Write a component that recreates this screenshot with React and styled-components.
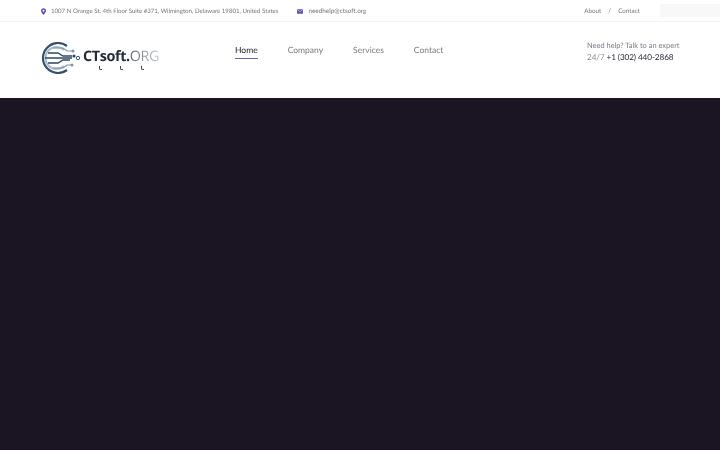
import React from 'react';
import styled, { createGlobalStyle } from 'styled-components';

const GlobalStyle = createGlobalStyle`
  * { margin: 0; padding: 0; box-sizing: border-box; }
  html, body { height: 100%; }
  body {
    background: #fff;
    font-family: Lato, "Open Sans", Arial, sans-serif;
    text-rendering: geometricPrecision;
    overflow: hidden;
  }
`;

const Page = styled.div`
  display: flex;
  flex-direction: column;
  height: 450px;
  will-change: transform;
`;

const TopBar = styled.div`
  display: flex;
  align-items: center;
  height: 22px;
  padding: 1px 0 0 41px;
  border-bottom: 1px solid #f2f2f4;
  color: #77757f;
`;

const InfoItem = styled.span`
  display: flex;
  align-items: center;
  gap: 5px;
  margin-right: ${p => p.$gap || 0}px;
  font-size: ${p => p.$size}px;
  white-space: nowrap;
`;

const TopLinks = styled.div`
  display: flex;
  align-items: center;
  margin-left: auto;
  gap: 7px;
  font-size: 6.3px;
`;

const SearchStub = styled.div`
  width: 60px;
  height: 13px;
  margin-top: -1px;
  margin-left: 13px;
  background: #f8f8f9;
`;

const Header = styled.header`
  display: grid;
  grid-template-columns: 195px 352px 1fr;
  align-items: start;
  height: 76px;
  padding: 19px 0 0 40px;
`;

const Logo = styled.div`
  display: flex;
  align-items: center;
  height: 32px;
  margin-top: 1px;
  position: relative;
`;

const LogoText = styled.span`
  font-family: "Open Sans", Arial, sans-serif;
  font-size: 14.4px;
  font-weight: 700;
  letter-spacing: -0.4px;
  color: #232b3a;
  margin-left: -1px;
  margin-top: -4px;
`;

const LogoOrg = styled.span`
  font-weight: 400;
  background: linear-gradient(90deg, #5f6b7a, #c6ccd4);
  -webkit-background-clip: text;
  background-clip: text;
  color: transparent;
`;

const LogoTicks = styled.div`
  position: absolute;
  left: 59px;
  top: 24px;
  display: flex;
  gap: 18px;
`;

const Tick = styled.i`
  display: block;
  width: 3px;
  height: 4px;
  border-left: 1px solid #3b4352;
  border-bottom: 1px solid #3b4352;
  border-bottom-left-radius: 2px;
`;

const Nav = styled.nav`
  display: flex;
  gap: 30px;
  font-size: 8.5px;
  margin-top: 3px;
`;

const NavLink = styled.a`
  display: block;
  padding: 1px 0 3px;
  color: ${p => (p.$active ? '#1c1726' : '#7b7984')};
  border-bottom: 1px solid ${p => (p.$active ? '#6a5fb0' : 'transparent')};
`;

const Help = styled.div`
  display: flex;
  flex-direction: column;
  gap: 2px;
  font-size: 7.45px;
  color: #7b7984;
`;

const Phone = styled.div`
  font-size: 8.2px;
  letter-spacing: -0.1px;
  color: #8a8893;
`;

const PhoneNumber = styled.span`
  color: #2a2634;
`;

const Hero = styled.main`
  flex: 1;
  background: #1a1423;
`;

const PinIcon = () => (
  <svg width="5" height="7" viewBox="0 0 6 8">
    <path d="M3 0a3 3 0 0 1 3 3c0 2-3 5-3 5S0 5 0 3a3 3 0 0 1 3-3z" fill="#5b4fb5" />
    <circle cx="3" cy="3" r="1.2" fill="#fff" />
  </svg>
);

const MailIcon = () => (
  <svg width="6" height="5" viewBox="0 0 7 6">
    <rect width="7" height="5.6" y="0.2" rx="0.6" fill="#5b4fb5" />
    <path d="M0.6 1.2 3.5 3.2 6.4 1.2" fill="none" stroke="#fff" strokeWidth="0.6" />
  </svg>
);

const LogoMark = () => (
  <svg width="44" height="32" viewBox="0 0 44 32" fill="none">
    <path d="M27 4A15 15 0 1 0 27 28" stroke="#34506f" strokeWidth="2.2" />
    <path d="M24 8A11 11 0 1 0 24 24" stroke="#a9bccd" strokeWidth="2" />
    <path d="M8 11h10l5 3h9M5 16h27M8 21h10l5-3h7" stroke="#2f4763" strokeWidth="1.3" />
    <path d="M13 6h10l4 3h5M13 26h10l4-3h4" stroke="#7f97ae" strokeWidth="1.2" />
    <circle cx="33" cy="9" r="1.5" fill="#7f95ab" />
    <circle cx="34" cy="14" r="1.6" fill="#2f4763" />
    <circle cx="38" cy="16" r="1.7" stroke="#2f4763" strokeWidth="0.9" />
    <circle cx="32" cy="23" r="1.5" fill="#7f95ab" />
  </svg>
);

export default function App() {
  return (
    <Page>
      <GlobalStyle />
      <TopBar>
        <InfoItem $gap={19} $size={6.1}>
          <PinIcon />
          1007 N Orange St. 4th Floor Suite #371, Wilmington, Delaware 19801, United States
        </InfoItem>
        <InfoItem $size={6.4}>
          <MailIcon />
          needhelp@ctsoft.org
        </InfoItem>
        <TopLinks>
          <span>About</span>
          <span>/</span>
          <span>Contact</span>
          <SearchStub />
        </TopLinks>
      </TopBar>
      <Header>
        <Logo>
          <LogoMark />
          <LogoText>
            CTsoft.<LogoOrg>ORG</LogoOrg>
          </LogoText>
          <LogoTicks>
            <Tick />
            <Tick />
            <Tick />
          </LogoTicks>
        </Logo>
        <Nav>
          <NavLink $active>Home</NavLink>
          <NavLink>Company</NavLink>
          <NavLink>Services</NavLink>
          <NavLink>Contact</NavLink>
        </Nav>
        <Help>
          <span>Need help? Talk to an expert</span>
          <Phone>
            24/7 <PhoneNumber>+1 (302) 440-2868</PhoneNumber>
          </Phone>
        </Help>
      </Header>
      <Hero />
    </Page>
  );
}
